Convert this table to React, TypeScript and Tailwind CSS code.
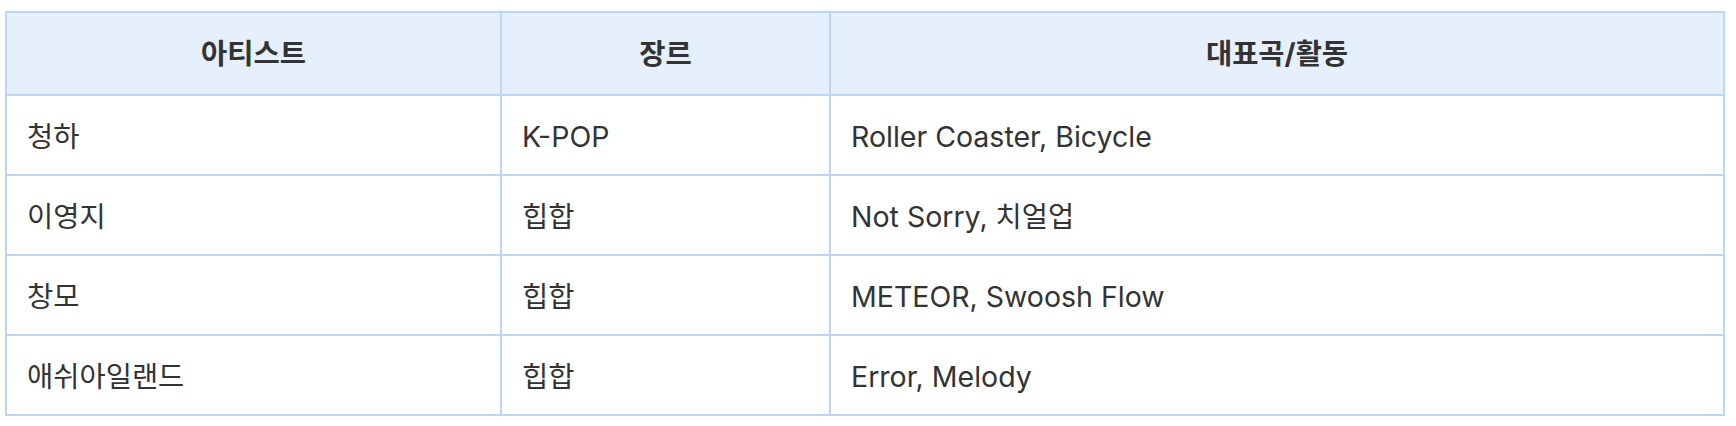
import React from 'react';

type Row = { artist: string; genre: string; works: string };

const rows: Row[] = [
  { artist: '청하', genre: 'K-POP', works: 'Roller Coaster, Bicycle' },
  { artist: '이영지', genre: '힙합', works: 'Not Sorry, 치얼업' },
  { artist: '창모', genre: '힙합', works: 'METEOR, Swoosh Flow' },
  { artist: '애쉬아일랜드', genre: '힙합', works: 'Error, Melody' },
];

const App: React.FC = () => {
  return (
    <div className="w-[1736px] h-[426px] bg-white pl-[5px] pt-[11px] font-['Inter','Noto_Sans_CJK_KR',sans-serif] text-[#333333]">
      <table className="w-[1720px] border-collapse text-[28.5px] leading-[40px]">
        <thead>
          <tr className="bg-[#e6f0fd] h-[83px]">
            <th className="w-[495px] border-2 border-[#bcd5f6] font-bold text-center">아티스트</th>
            <th className="w-[329px] border-2 border-[#bcd5f6] font-bold text-center">장르</th>
            <th className="border-2 border-[#bcd5f6] font-bold text-center">대표곡/활동</th>
          </tr>
        </thead>
        <tbody>
          {rows.map(r => (
            <tr key={r.artist} className="h-[80px]">
              <td className="border-2 border-[#bcd5f6] px-[20px] pt-[4px]">{r.artist}</td>
              <td className="border-2 border-[#bcd5f6] px-[20px] pt-[4px]">{r.genre}</td>
              <td className="border-2 border-[#bcd5f6] px-[20px] pt-[4px]">{r.works}</td>
            </tr>
          ))}
        </tbody>
      </table>
    </div>
  );
};

export default App;
